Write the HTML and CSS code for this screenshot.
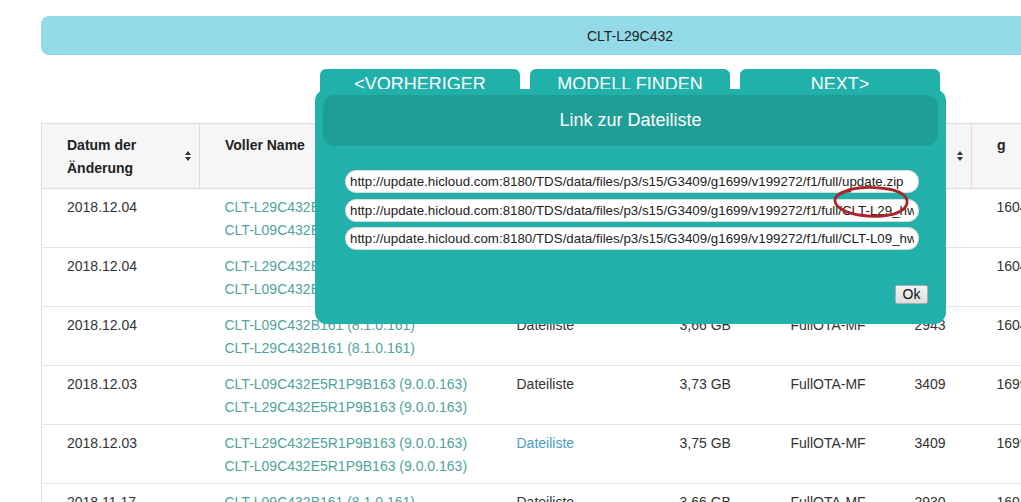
FILE: index.html
```html
<!DOCTYPE html>
<html>
<head>
    <title>CLT-L29C432 Firmware</title>
    <link rel="stylesheet" href="styles.css">
</head>
<body>
    <div class="page">
        <div class="model-bar">CLT-L29C432</div>

        <div class="nav">
            <button class="nav-btn">&lt;VORHERIGER</button>
            <button class="nav-btn">MODELL FINDEN</button>
            <button class="nav-btn">NEXT&gt;</button>
        </div>

        <table class="fw-table">
            <colgroup>
                <col style="width: 158px">
                <col style="width: 292px">
                <col style="width: 163px">
                <col style="width: 111px">
                <col style="width: 124px">
                <col style="width: 82px">
                <col style="width: 120px">
                <col>
            </colgroup>
            <thead>
                <tr>
                    <th><div class="th-inner"><span>Datum der Änderung</span><span class="sort"></span></div></th>
                    <th><div class="th-inner"><span>Voller Name</span><span class="sort"></span></div></th>
                    <th><div class="th-inner"><span>Dateiliste</span></div></th>
                    <th><div class="th-inner"><span>Größe</span><span class="sort"></span></div></th>
                    <th><div class="th-inner"><span>Typ</span><span class="sort"></span></div></th>
                    <th><div class="th-inner"><span>G</span><span class="sort"></span></div></th>
                    <th><div class="th-inner"><span>g</span><span class="sort"></span></div></th>
                    <th><div class="th-inner"><span>v</span><span class="sort"></span></div></th>
                </tr>
            </thead>
            <tbody>
                <tr>
                    <td>2018.12.04</td>
                    <td><a class="fw">CLT-L29C432E5R1P9B172 (9.0.0.172)</a><a class="fw">CLT-L09C432E5R1P9B172 (9.0.0.172)</a></td>
                    <td>Dateiliste</td>
                    <td>3,78 GB</td>
                    <td>FullOTA-MF</td>
                    <td>3409</td>
                    <td>1604</td>
                    <td>199272</td>
                </tr>
                <tr>
                    <td>2018.12.04</td>
                    <td><a class="fw">CLT-L29C432E5R1P9B171 (9.0.0.171)</a><a class="fw">CLT-L09C432E5R1P9B171 (9.0.0.171)</a></td>
                    <td>Dateiliste</td>
                    <td>3,77 GB</td>
                    <td>FullOTA-MF</td>
                    <td>3409</td>
                    <td>1604</td>
                    <td>199270</td>
                </tr>
                <tr>
                    <td>2018.12.04</td>
                    <td><a class="fw">CLT-L09C432B161 (8.1.0.161)</a><a class="fw">CLT-L29C432B161 (8.1.0.161)</a></td>
                    <td>Dateiliste</td>
                    <td>3,66 GB</td>
                    <td>FullOTA-MF</td>
                    <td>2943</td>
                    <td>1604</td>
                    <td>199268</td>
                </tr>
                <tr>
                    <td>2018.12.03</td>
                    <td><a class="fw">CLT-L09C432E5R1P9B163 (9.0.0.163)</a><a class="fw">CLT-L29C432E5R1P9B163 (9.0.0.163)</a></td>
                    <td>Dateiliste</td>
                    <td>3,73 GB</td>
                    <td>FullOTA-MF</td>
                    <td>3409</td>
                    <td>1699</td>
                    <td>198544</td>
                </tr>
                <tr>
                    <td>2018.12.03</td>
                    <td><a class="fw">CLT-L29C432E5R1P9B163 (9.0.0.163)</a><a class="fw">CLT-L09C432E5R1P9B163 (9.0.0.163)</a></td>
                    <td><a class="list-link">Dateiliste</a></td>
                    <td>3,75 GB</td>
                    <td>FullOTA-MF</td>
                    <td>3409</td>
                    <td>1699</td>
                    <td>198540</td>
                </tr>
                <tr>
                    <td>2018.11.17</td>
                    <td><a class="fw">CLT-L09C432B161 (8.1.0.161)</a></td>
                    <td>Dateiliste</td>
                    <td>3,66 GB</td>
                    <td>FullOTA-MF</td>
                    <td>2930</td>
                    <td>1604</td>
                    <td>193011</td>
                </tr>
            </tbody>
        </table>
    </div>

    <!-- Dialog mit den Links -->
    <div class="modal">
        <div class="modal-head">Link zur Dateiliste</div>
        <div class="modal-body">
            <input class="link-field" type="text" value="http://update.hicloud.com:8180/TDS/data/files/p3/s15/G3409/g1699/v199272/f1/full/update.zip">
            <input class="link-field" type="text" value="http://update.hicloud.com:8180/TDS/data/files/p3/s15/G3409/g1699/v199272/f1/full/CLT-L29_hw_eu/update_full_base.zip">
            <input class="link-field" type="text" value="http://update.hicloud.com:8180/TDS/data/files/p3/s15/G3409/g1699/v199272/f1/full/CLT-L09_hw_eu/update_full_base.zip">
        </div>
        <div class="modal-foot">
            <button class="ok-btn">Ok</button>
        </div>
        <svg class="scribble" width="82" height="34" viewBox="0 0 82 34">
            <path d="M10 9 C 20 2, 40 1, 58 4 C 70 6, 78 11, 77 18 C 76 25, 66 30, 52 31 C 38 32, 22 30, 13 25 C 5 21, 3 15, 7 11 C 10 8, 14 6, 20 6"
                  fill="none" stroke="#aa2329" stroke-width="2.8" stroke-linecap="round"/>
        </svg>
    </div>
</body>
</html>
```

FILE: styles.css
```css
body {
    margin: 0;
    font-family: "Liberation Sans", Arial, sans-serif;
    font-size: 14px;
    color: #333;
    background-color: #fff;
    overflow: hidden;
}

.page {
    width: 1178px;
    margin-left: 41px;
    padding-top: 16px;
}

.model-bar {
    height: 39px;
    line-height: 40px;
    background-color: #93d9e8;
    border-radius: 8px;
    text-align: center;
    color: #222;
    font-size: 14px;
}

.nav {
    display: flex;
    justify-content: center;
    gap: 10px;
    margin-top: 14px;
    margin-bottom: 14px;
}

.nav-btn {
    width: 200px;
    height: 40px;
    padding: 6px 0 16px;
    border: none;
    border-radius: 6px 6px 0 0;
    background-color: #21b1ab;
    color: #fff;
    font-family: "Liberation Sans", Arial, sans-serif;
    font-size: 18px;
    line-height: 18px;
    vertical-align: top;
}

.fw-table {
    width: 1178px;
    table-layout: fixed;
    border-collapse: collapse;
    border-left: 1px solid #ddd;
}

.fw-table th {
    background-color: #f6f6f6;
    border-top: 1px solid #ddd;
    border-right: 1px solid #ddd;
    border-bottom: 1px solid #ddd;
    padding: 10px 7px 8px 25px;
    text-align: left;
    vertical-align: top;
    font-weight: bold;
    color: #222;
    line-height: 23px;
    height: 46px;
}

.th-inner {
    display: flex;
    justify-content: space-between;
    align-items: flex-start;
    gap: 8px;
}

.sort {
    flex: none;
    position: relative;
    width: 7px;
    height: 10px;
    margin-top: 17px;
}

.sort::before,
.sort::after {
    content: "";
    position: absolute;
    left: 0;
    border-left: 3.5px solid transparent;
    border-right: 3.5px solid transparent;
}

.sort::before {
    top: 0;
    border-bottom: 4px solid #333;
}

.sort::after {
    bottom: 0;
    border-top: 4px solid #333;
}

.fw-table td {
    padding: 7px 10px 5px 25px;
    border-bottom: 1px solid #e4e4e4;
    vertical-align: top;
    line-height: 23px;
    height: 46px;
    white-space: nowrap;
    overflow: hidden;
}

.fw {
    display: block;
    color: #4fa39d;
    text-decoration: none;
}

.list-link {
    color: #4a9cc4;
}

.modal {
    position: absolute;
    left: 315px;
    top: 89px;
    width: 631px;
    height: 235px;
    box-sizing: border-box;
    padding: 6px 8px 0;
    background-color: #21b0aa;
    border-radius: 12px;
}

.modal-head {
    height: 51px;
    line-height: 51px;
    background-color: #1f9d97;
    border-radius: 12px;
    text-align: center;
    color: #fff;
    font-size: 18px;
}

.modal-body {
    display: flex;
    flex-direction: column;
    gap: 5.5px;
    padding: 24px 0 0 22px;
}

.link-field {
    width: 574px;
    height: 23px;
    box-sizing: border-box;
    padding: 0 4px;
    border: 1px solid #dcdcdc;
    border-radius: 11px;
    background-color: #fff;
    color: #222;
    font-family: "Liberation Sans", Arial, sans-serif;
    font-size: 13.33px;
    outline: none;
}

.modal-foot {
    display: flex;
    justify-content: flex-end;
    padding: 35px 10px 0 0;
}

.ok-btn {
    width: 33px;
    height: 19px;
    padding: 0;
    border: 1px solid #adadad;
    border-radius: 2px;
    background: linear-gradient(#f4f4f4, #dedede);
    color: #111;
    font-family: "Liberation Sans", Arial, sans-serif;
    font-size: 14px;
    line-height: 17px;
}

.scribble {
    position: absolute;
    left: 515px;
    top: 96px;
}
```
